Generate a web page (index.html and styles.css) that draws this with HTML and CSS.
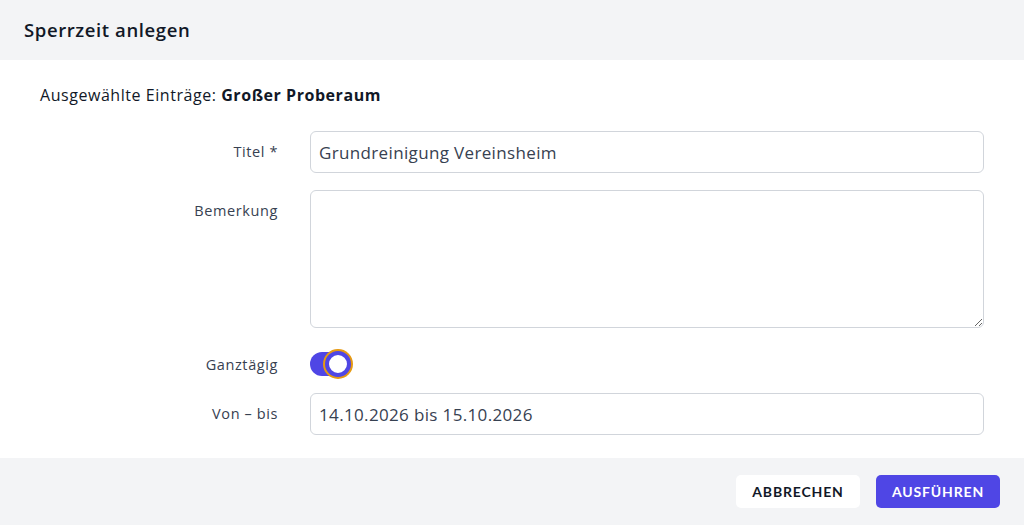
FILE: index.html
```html
<!DOCTYPE html>
<html lang="de">
<head>
    <meta charset="UTF-8">
    <meta name="viewport" content="width=device-width, initial-scale=1.0">
    <title>Sperrzeit anlegen</title>
    <link rel="stylesheet" href="styles.css">
</head>
<body>
    <div class="modal">
        <!-- Kopfzeile -->
        <div class="modal-header">
            <h2 class="modal-title">Sperrzeit anlegen</h2>
        </div>

        <!-- Formular -->
        <div class="modal-body">
            <p class="selection">Ausgewählte Einträge: <strong>Großer Proberaum</strong></p>

            <div class="form-row">
                <label class="form-label" for="titel">Titel *</label>
                <input class="form-input" id="titel" type="text" value="Grundreinigung Vereinsheim">
            </div>

            <div class="form-row">
                <label class="form-label" for="bemerkung">Bemerkung</label>
                <textarea class="form-input form-textarea" id="bemerkung"></textarea>
            </div>

            <div class="form-row form-row-center">
                <span class="form-label">Ganztägig</span>
                <span class="toggle">
                    <span class="toggle-knob"></span>
                </span>
            </div>

            <div class="form-row">
                <label class="form-label" for="zeitraum">Von – bis</label>
                <input class="form-input" id="zeitraum" type="text" value="14.10.2026 bis 15.10.2026">
            </div>
        </div>

        <!-- Aktionen -->
        <div class="modal-footer">
            <button class="btn btn-secondary">Abbrechen</button>
            <button class="btn btn-primary">Ausführen</button>
        </div>
    </div>
</body>
</html>
```

FILE: styles.css
```css
* {
    margin: 0;
    padding: 0;
    box-sizing: border-box;
}

body {
    font-family: 'Open Sans', 'Noto Sans', sans-serif;
    color: #1f2937;
    background: #fff;
    width: 1024px;
    height: 525px;
    overflow: hidden;
}

.modal {
    display: flex;
    flex-direction: column;
    height: 525px;
}

.modal-header {
    height: 60px;
    background: #f3f4f6;
    display: flex;
    align-items: center;
    padding: 0 24px;
}

.modal-title {
    font-size: 18.5px;
    font-weight: 600;
    letter-spacing: 0.6px;
    color: #111827;
    padding-bottom: 2px;
}

.modal-body {
    flex: 1;
    padding: 24px 40px 0 40px;
}

.selection {
    font-size: 16px;
    letter-spacing: 0.55px;
    color: #111827;
    margin-bottom: 25px;
}

.selection strong {
    font-weight: 700;
}

.form-row {
    display: flex;
    align-items: flex-start;
    margin-bottom: 17px;
}

.form-row-center {
    align-items: center;
    margin-top: 24px;
}

.form-label {
    width: 238px;
    text-align: right;
    font-size: 14.5px;
    letter-spacing: 0.6px;
    color: #374151;
    padding-top: 11px;
    margin-right: 32px;
}

.form-row-center .form-label {
    padding-top: 0;
}

.form-input {
    width: 674px;
    height: 42px;
    border: 1px solid #d1d5db;
    border-radius: 6px;
    padding: 0 8px;
    font-family: inherit;
    font-size: 17px;
    letter-spacing: 0.35px;
    color: #374151;
    background: #fff;
    outline: none;
}

.form-textarea {
    height: 138px;
    resize: vertical;
    display: block;
}

.toggle {
    position: relative;
    display: inline-block;
    width: 40px;
    height: 24px;
    border-radius: 12px;
    background: #4f46e5;
}

.toggle-knob {
    position: absolute;
    top: -1px;
    right: -1px;
    width: 26px;
    height: 26px;
    border-radius: 50%;
    background: #fff;
    border: 4px solid #4f46e5;
    box-shadow: 0 0 0 2px #e69a12;
}

.modal-footer {
    height: 67px;
    background: #f3f4f6;
    display: flex;
    justify-content: flex-end;
    align-items: flex-start;
    gap: 16px;
    padding: 17px 24px 0 0;
}

.btn {
    height: 33px;
    width: 124px;
    border: none;
    border-radius: 5px;
    font-family: 'Lato', sans-serif;
    font-size: 14px;
    font-weight: 700;
    letter-spacing: 0.06em;
    text-transform: uppercase;
    cursor: pointer;
}

.btn-secondary {
    background: #fff;
    color: #111827;
}

.btn-primary {
    background: #4f46e5;
    color: #fff;
}
```
